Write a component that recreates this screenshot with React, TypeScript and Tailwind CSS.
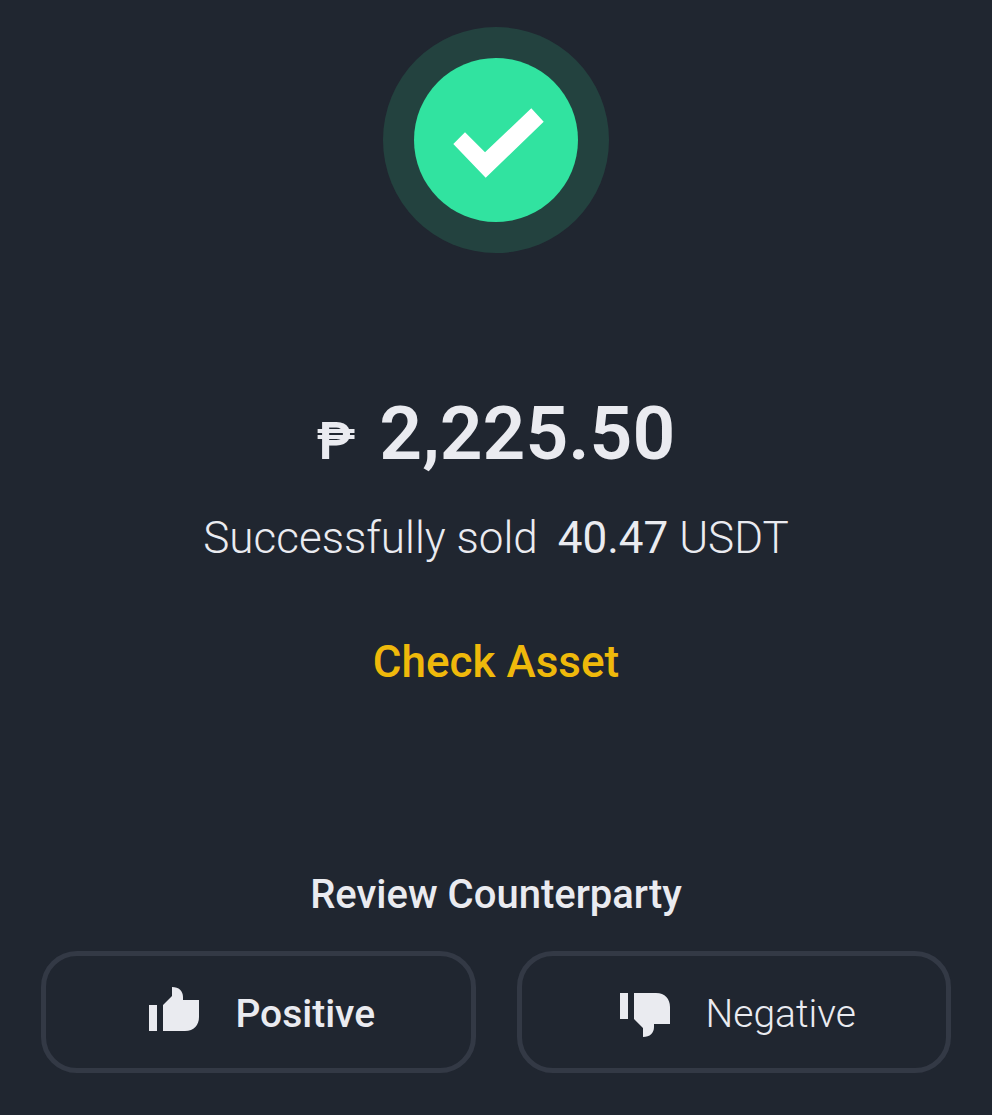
import type { ReactNode } from "react";

function SuccessBadge() {
  return (
    <svg
      width="226"
      height="226"
      viewBox="0 0 226 226"
      role="img"
      aria-label="Success"
    >
      <circle cx="113" cy="113" r="113" fill="#23423f" />
      <circle cx="113" cy="113" r="82" fill="#31e3a0" />
      <path
        d="M82 105.3 L102 125.3 L148.3 81.3 L160.7 94.7 L102.7 150.7 L70.3 117 Z"
        fill="#ffffff"
      />
    </svg>
  );
}

function ThumbUp() {
  return (
    <svg width="50" height="50" viewBox="0 0 50 50" fill="currentColor" aria-hidden="true">
      <path d="M0 18H8V44H0Z" />
      <path d="M14 18L23 9V0C30 0 34 4 34 10V13H50V30C50 38 45 44 36 44H14Z" />
    </svg>
  );
}

function ThumbDown() {
  return (
    <svg width="50" height="50" viewBox="0 0 50 50" fill="currentColor" aria-hidden="true">
      <path d="M0 6H8V32H0Z" />
      <path d="M14 32L23 41V50C30 50 34 46 34 40V37H50V20C50 12 45 6 36 6H14Z" />
    </svg>
  );
}

interface ReviewButtonProps {
  icon: ReactNode;
  children: ReactNode;
  className?: string;
}

function ReviewButton({ icon, children, className = "" }: ReviewButtonProps) {
  return (
    <button
      type="button"
      className={`flex h-[122px] flex-1 items-center justify-center gap-9 rounded-[36px] border-5 border-[#333945] pl-2 text-[39px] leading-12 ${className}`}
    >
      {icon}
      <span className="pt-1">{children}</span>
    </button>
  );
}

export default function App() {
  return (
    <main className="flex min-h-screen flex-col items-center bg-[#202630] px-[41px] pt-[27px] pb-[42px] font-['Roboto',sans-serif] text-[#eaebf0]">
      <SuccessBadge />

      {/* Amount */}
      <h1 className="mt-[132px] flex items-baseline gap-6 text-[75px] leading-24 font-semibold">
        <span className="text-[52px]">₱</span>
        <span>2,225.50</span>
      </h1>
      <p className="mt-5 flex gap-5 text-[44px] leading-14">
        <span className="font-[350]">Successfully sold</span>
        <span>
          40.47 <span className="font-[350]">USDT</span>
        </span>
      </p>
      <a href="#assets" className="mt-[68px] text-[44px] leading-14 font-medium text-[#efb90b]">
        Check Asset
      </a>

      {/* Review */}
      <section className="mt-auto w-full">
        <h2 className="text-center text-[40px] leading-12 font-medium">
          Review Counterparty
        </h2>
        <div className="mt-8 flex gap-[41px]">
          <ReviewButton icon={<ThumbUp />} className="font-medium">
            Positive
          </ReviewButton>
          <ReviewButton icon={<ThumbDown />} className="font-[350]">
            Negative
          </ReviewButton>
        </div>
      </section>
    </main>
  );
}
